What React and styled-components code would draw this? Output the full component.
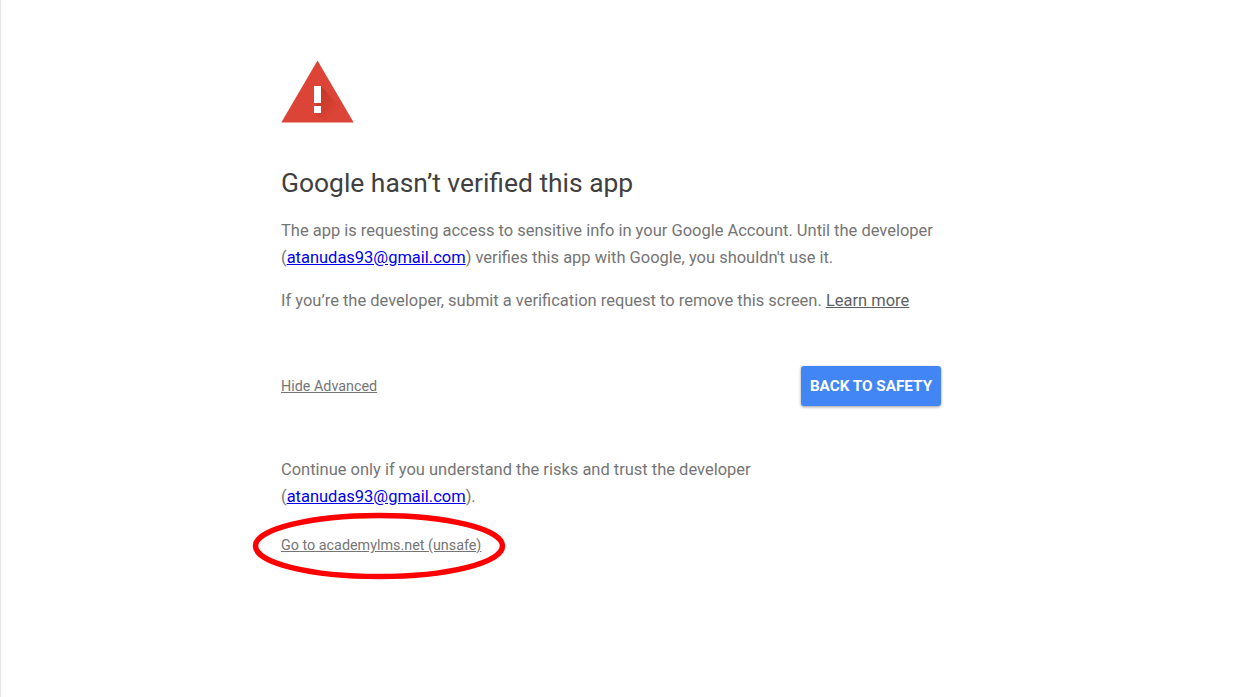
import React from 'react';
import styled, { createGlobalStyle } from 'styled-components';

const GlobalStyle = createGlobalStyle`
  html, body {
    margin: 0;
    padding: 0;
    background: #fff;
    font-family: Roboto, "Liberation Sans", sans-serif;
  }
`;

const Page = styled.div`
  min-height: 697px;
  box-sizing: border-box;
  border-left: 1px solid #e4e4e4;
  padding: 60px 0 0 280px;
`;

const Content = styled.div`
  width: 660px;
`;

const WarningIcon = styled.svg`
  display: block;
  width: 73px;
  height: 63px;
`;

const Title = styled.h1`
  margin: 44px 0 0;
  font-size: 26.4px;
  line-height: 32px;
  font-weight: 400;
  color: #404040;
`;

const Paragraph = styled.p`
  margin: ${({ $top }) => $top}px 0 0;
  font-size: 16.48px;
  line-height: 27px;
  color: #757575;
`;

const EmailLink = styled.a`
  color: #00e;
  text-decoration: underline;
`;

const LearnMore = styled.a`
  color: #5f5f5f;
  text-decoration: underline;
`;

const ActionRow = styled.div`
  display: flex;
  align-items: center;
  justify-content: space-between;
  margin-top: 52px;
`;

const SmallLink = styled.a`
  font-size: 14.35px;
  line-height: 20px;
  color: #757575;
  text-decoration: underline;
`;

const HideLink = styled(SmallLink)`
  padding-top: 2px;
`;

const SafetyButton = styled.button`
  width: 140px;
  height: 40px;
  padding: 0;
  border: 0;
  border-radius: 3px;
  background: #4285f4;
  color: #fff;
  font-family: inherit;
  font-size: 15.25px;
  font-weight: 700;
  box-shadow: 0 1px 3px rgba(0, 0, 0, 0.4);
`;

const UnsafeRow = styled.div`
  position: relative;
  margin-top: 25px;
  height: 20px;
`;

const Circle = styled.svg`
  position: absolute;
  left: -30px;
  top: -25px;
  width: 256px;
  height: 72px;
`;

export default function App() {
  return (
    <>
      <GlobalStyle />
      <Page>
        <Content>
          <WarningIcon viewBox="0 0 73 63">
            <defs>
              <linearGradient id="shade" gradientUnits="userSpaceOnUse" x1="36" y1="36" x2="54" y2="54">
                <stop offset="0" stopColor="#a52714" stopOpacity="0.4" />
                <stop offset="1" stopColor="#a52714" stopOpacity="0" />
              </linearGradient>
            </defs>
            <path d="M36.5 0.5 L72.7 62.5 H0.3 Z" fill="#db4437" />
            <path d="M40 26 L58 46 L52 62.5 H44 L33 52 Z" fill="url(#shade)" />
            <rect x="33" y="26" width="7" height="17" fill="#fff" />
            <rect x="33" y="46" width="7" height="7" fill="#fff" />
          </WarningIcon>
          <Title>Google hasn’t verified this app</Title>
          <Paragraph $top={18}>
            The app is requesting access to sensitive info in your Google Account. Until the developer
            <br />
            (<EmailLink href="#">atanudas93@gmail.com</EmailLink>) verifies this app with Google, you shouldn't use it.
          </Paragraph>
          <Paragraph $top={16}>
            If you’re the developer, submit a verification request to remove this screen. <LearnMore href="#">Learn more</LearnMore>
          </Paragraph>
          <ActionRow>
            <HideLink href="#">Hide Advanced</HideLink>
            <SafetyButton>BACK TO SAFETY</SafetyButton>
          </ActionRow>
          <Paragraph $top={50}>
            Continue only if you understand the risks and trust the developer
            <br />
            (<EmailLink href="#">atanudas93@gmail.com</EmailLink>).
          </Paragraph>
          <UnsafeRow>
            <SmallLink href="#">Go to academylms.net (unsafe)</SmallLink>
            <Circle viewBox="0 0 256 72">
              <ellipse cx="128" cy="36" rx="123.5" ry="30.5" fill="none" stroke="#f00" strokeWidth="5.5" />
            </Circle>
          </UnsafeRow>
        </Content>
      </Page>
    </>
  );
}
